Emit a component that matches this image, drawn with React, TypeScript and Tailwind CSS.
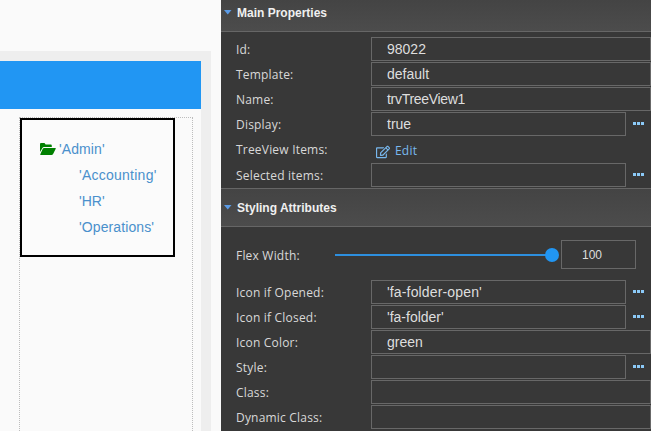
import { FaRegEdit } from "react-icons/fa";

const sans = "font-['Liberation_Sans',Arial,sans-serif]";
const label = "font-['Open_Sans','Noto_Sans',sans-serif] text-[12px] tracking-[0.2px] text-[#d8d8d8] pt-[2px]";

function Dots() {
  return (
    <div className="w-[25px] flex justify-center gap-[1px] pb-[1px] shrink-0">
      <span className="w-[3px] h-[3px] bg-[#8ccaf8]" />
      <span className="w-[3px] h-[3px] bg-[#8ccaf8]" />
      <span className="w-[3px] h-[3px] bg-[#8ccaf8]" />
    </div>
  );
}

function Row({ name, value, dots, valueCls }: { name: string; value?: string; dots?: boolean; valueCls?: string }) {
  return (
    <div className="flex items-center h-[24px] mb-[1px]">
      <div className={`${label} w-[150px] pl-[15px] shrink-0`}>{name}</div>
      <div className={`h-[24px] flex-1 min-w-0 border border-[#686868] pl-[15px] flex items-center text-[14px] text-[#dedede] ${sans} ${valueCls ?? ""}`}>
        {value}
      </div>
      {dots && <Dots />}
    </div>
  );
}

function Header({ title, cls }: { title: string; cls: string }) {
  return (
    <div className={`flex items-center bg-gradient-to-b from-[#444444] to-[#4c4c4c] border-[#666666] ${cls}`}>
      <svg width="8" height="5" viewBox="0 0 8 5" className="ml-[3px] mr-[5px] shrink-0">
        <path d="M0 0H7.5L3.75 4.5Z" fill="#5b9be6" />
      </svg>
      <span className={`${sans} font-bold text-[12px] text-[#f0f0f0]`}>{title}</span>
    </div>
  );
}

function TreeItem({ text, first, cls }: { text: string; first?: boolean; cls?: string }) {
  return (
    <div className={`h-[26px] flex items-center ${first ? "pl-[18px]" : "pl-[57px]"} ${sans} text-[14px] text-[#4a90cc] ${cls ?? ""}`}>
      {first && (
        <svg width="16" height="12" viewBox="0 0 16 12" className="mr-[3px] shrink-0">
          <path d="M0 1.2C0 .5.5 0 1.2 0H4.5L5.6 1.6H10.6C11.3 1.6 11.8 2.1 11.8 2.8V4H4C3.3 4 2.8 4.3 2.4 4.9L0 9Z" fill="#008000" />
          <path d="M4.1 5H15C15.7 5 16 5.5 15.6 6.1L13.1 10.9C12.7 11.6 12.2 12 11.5 12H1C.3 12 0 11.5.4 10.9L2.7 5.9C3 5.3 3.5 5 4.1 5Z" fill="#008000" />
        </svg>
      )}
      {text}
    </div>
  );
}

export default function App() {
  return (
    <div className="w-[651px] h-[431px] overflow-hidden flex bg-[#fafafa]">
      <div className="w-[221px] shrink-0 pt-[51px]">
        <div className="w-[211px] h-[380px] bg-[#eeeeee] pt-[10px] pr-[10px] flex flex-col">
          <div className="h-[48px] bg-[#2196f3] shrink-0" />
          <div className="flex-1 bg-[#fafafa] pt-[8px] pl-[19px]">
            <div className="w-[174px] h-[320px] border border-dotted border-[#bdbdbd] border-b-0">
              <div className="w-[155px] h-[139px] border-[2px] border-black bg-[#fbfbfb] pt-[16px]">
                <TreeItem text="'Admin'" first cls="tracking-[0.1px]" />
                <TreeItem text="'Accounting'" cls="tracking-[0.25px]" />
                <TreeItem text="'HR'" />
                <TreeItem text="'Operations'" cls="tracking-[0.1px]" />
              </div>
            </div>
          </div>
        </div>
      </div>
      <div className="flex-1 min-w-0 bg-[#383838] flex flex-col">
        <Header title="Main Properties" cls="h-[32px] border-b pb-[6px] mb-[5px] shrink-0" />
        <Row name="Id:" value="98022" />
        <Row name="Template:" value="default" />
        <Row name="Name:" value="trvTreeView1" valueCls="tracking-[-0.3px]" />
        <Row name="Display:" value="true" dots />
        <div className="flex items-center h-[25px] mb-[1px]">
          <div className={`${label} w-[155px] pl-[15px] shrink-0 -mt-[2px]`}>TreeView Items:</div>
          <FaRegEdit className="text-[#78b8ee] text-[14px] mr-[5px] mt-[4px]" />
          <span className="font-['Open_Sans',sans-serif] text-[12px] tracking-[0.2px] text-[#78b8ee] pt-[2px]">Edit</span>
        </div>
        <Row name="Selected items:" dots />
        <Header title="Styling Attributes" cls="h-[39px] border-y shrink-0" />
        <div className="flex items-center h-[53px] pt-[2px]">
          <div className={`${label} w-[114px] pl-[15px] shrink-0 mt-[1px]`}>Flex Width:</div>
          <div className="relative w-[217px] h-[2px] bg-[#2d8fdf] shrink-0">
            <span className="absolute right-[-7px] top-[-6px] w-[14px] h-[14px] rounded-full bg-[#2196f3]" />
          </div>
          <div className={`ml-[9px] w-[75px] h-[29px] border border-[#686868] flex items-center pl-[20px] text-[12px] text-[#dedede] ${sans}`}>100</div>
        </div>
        <Row name="Icon if Opened:" value="'fa-folder-open'" dots valueCls="tracking-[0.15px]" />
        <Row name="Icon if Closed:" value="'fa-folder'" dots />
        <Row name="Icon Color:" value="green" />
        <Row name="Style:" dots />
        <Row name="Class:" />
        <Row name="Dynamic Class:" />
      </div>
    </div>
  );
}
